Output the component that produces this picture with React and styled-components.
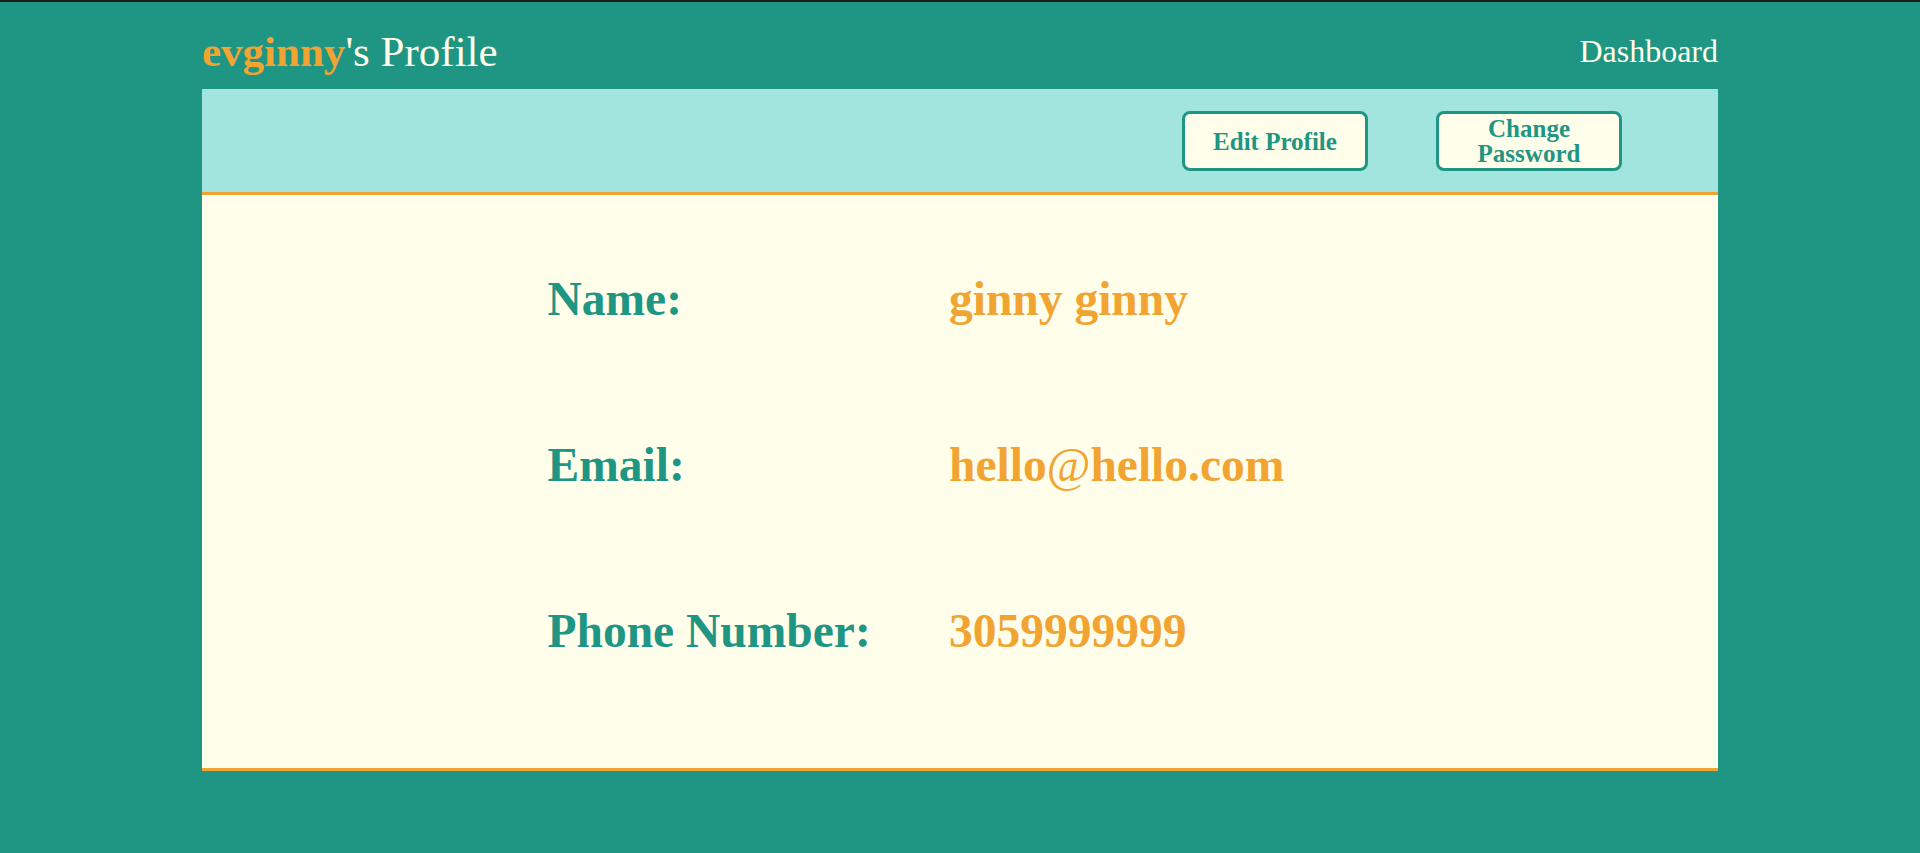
import React from "react";
import styled, { createGlobalStyle } from "styled-components";

const GlobalStyle = createGlobalStyle`
  html, body {
    margin: 0;
    padding: 0;
    background: #1f9583;
    font-family: "Liberation Serif", "Times New Roman", serif;
  }
`;

const Page = styled.div`
  min-height: 851px;
  border-top: 2px solid #1b1c1c;
  background: #1f9583;
`;

const Container = styled.div`
  width: 1516px;
  margin: 0 auto;
`;

const Header = styled.header`
  display: flex;
  justify-content: space-between;
  align-items: flex-start;
  height: 87px;
`;

const Title = styled.h1`
  margin: 24.5px 0 0;
  font-size: 43px;
  line-height: 1.15;
  font-weight: 400;
  color: #fffeea;
`;

const UserName = styled.span`
  color: #f2a432;
  font-weight: 700;
`;

const NavLink = styled.a`
  margin-top: 31px;
  font-size: 32px;
  line-height: 1.15;
  color: #fffeea;
  text-decoration: none;
  cursor: pointer;
`;

const Card = styled.section`
  background: #fffeea;
  border-bottom: 3px solid #f2a432;
`;

const Toolbar = styled.div`
  display: flex;
  justify-content: flex-end;
  align-items: center;
  gap: 68px;
  height: 103px;
  padding-right: 96px;
  background: #a2e5de;
  border-bottom: 3px solid #f2a432;
`;

const ActionButton = styled.button`
  width: 186px;
  height: 60px;
  box-sizing: border-box;
  margin-top: 1px;
  padding: 0 8px;
  background: #fffeea;
  border: 3px solid #1f9583;
  border-radius: 8px;
  color: #1f9583;
  font-family: "Liberation Serif", "Times New Roman", serif;
  font-weight: 700;
  font-size: 25px;
  line-height: 25px;
  text-align: center;
  cursor: pointer;
`;

const Details = styled.dl`
  margin: 0;
  padding: 77px 0 110px 345.5px;
  display: flex;
  flex-direction: column;
  gap: 112px;
`;

const Row = styled.div`
  display: grid;
  grid-template-columns: 401.5px 1fr;
  height: 54px;
`;

const Label = styled.dt`
  margin: 0;
  font-size: 47.5px;
  line-height: 54px;
  font-weight: 700;
  color: #1f9583;
  white-space: nowrap;
`;

const Value = styled.dd`
  margin: 0;
  font-size: 47.5px;
  line-height: 54px;
  font-weight: 700;
  color: #f2a432;
  white-space: nowrap;
`;

const At = styled.span`
  font-weight: 400;
`;

const profile = [
  { label: "Name:", value: "ginny ginny" },
  {
    label: "Email:",
    value: (
      <>
        hello<At>@</At>hello.com
      </>
    ),
  },
  { label: "Phone Number:", value: "3059999999" },
];

export default function App() {
  return (
    <Page>
      <GlobalStyle />
      <Container>
        <Header>
          <Title>
            <UserName>evginny</UserName>'s Profile
          </Title>
          <NavLink>Dashboard</NavLink>
        </Header>
        <Card>
          <Toolbar>
            <ActionButton>Edit Profile</ActionButton>
            <ActionButton>
              Change
              <br />
              Password
            </ActionButton>
          </Toolbar>
          <Details>
            {profile.map((p) => (
              <Row key={p.label}>
                <Label>{p.label}</Label>
                <Value>{p.value}</Value>
              </Row>
            ))}
          </Details>
        </Card>
      </Container>
    </Page>
  );
}
